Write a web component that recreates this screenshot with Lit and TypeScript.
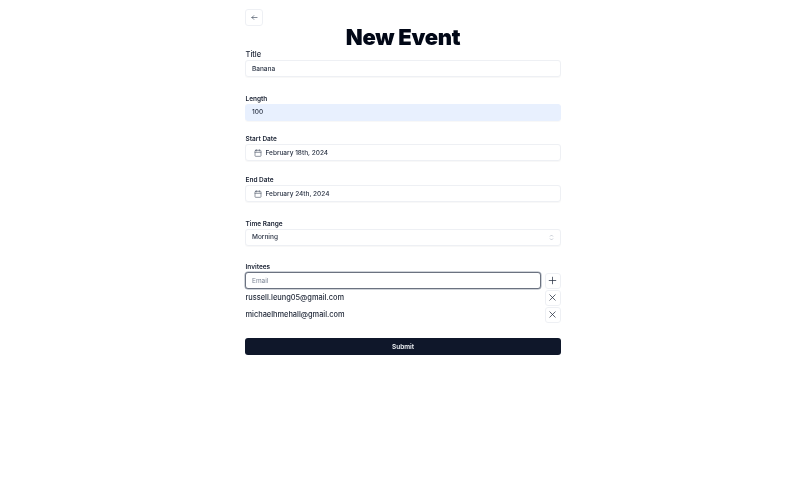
import { LitElement, html, css } from "lit";
import { customElement } from "lit/decorators.js";

const calendar = html`<svg class="cal" viewBox="0 0 24 24" fill="none" stroke="currentColor" stroke-width="2" stroke-linecap="round" stroke-linejoin="round"><rect x="3" y="4" width="18" height="18" rx="2"/><path d="M16 2v4M8 2v4M3 10h18"/></svg>`;
const xIcon = html`<svg class="ic" viewBox="0 0 15 15" fill="none" stroke="#1e293b" stroke-width="1.2" stroke-linecap="round"><path d="M3 3l9 9M12 3l-9 9"/></svg>`;
const plusIcon = html`<svg class="ic" viewBox="0 0 15 15" fill="none" stroke="#1e293b" stroke-width="1.2" stroke-linecap="round"><path d="M7.5 2v11M2 7.5h11"/></svg>`;

@customElement("app-root")
export class AppRoot extends LitElement {
  static styles = css`
    :host { display: block; font-family: Inter, "Liberation Sans", sans-serif; color: #0f172a; background: #fff; height: 504px; }
    .col { width: 316px; margin: 0 auto; padding-top: 9px; display: flex; flex-direction: column; will-change: transform; }
    .back { width: 18px; height: 17px; box-sizing: border-box; border: 1px solid #eef0f4; border-radius: 3px; display: flex; align-items: center; justify-content: center; background: #fff; }
    .back svg { width: 7px; height: 7px; }
    h1 { margin: 0; font-size: 22px; line-height: 23px; height: 23px; font-weight: 900; text-align: center; color: #020817; letter-spacing: -0.3px; }
    .label { font-size: 6.5px; line-height: 9px; height: 9px; font-weight: 600; color: #1a2233; padding-left: 0.5px; }
    .label.big { font-size: 7.5px; line-height: 10px; height: 10px; margin-top: 1px; font-weight: 500; }
    .field { box-sizing: border-box; height: 17px; border: 1px solid #eef0f4; border-radius: 3px; background: #fff; display: flex; align-items: center; padding: 0 6px; font-size: 6.5px; font-weight: 500; color: #2a3344; box-shadow: 0 0.5px 1px rgba(15,23,42,0.03); }
    .filled { background: #e8f0fe; border-color: #e8f0fe; }
    .date { padding-left: 7.5px; gap: 4px; }
    .cal { width: 8px; height: 8px; color: #5b6472; flex: none; }
    .sel { justify-content: space-between; }
    .sel svg { width: 5px; height: 7px; color: #a3abb8; }
    .g1 { margin-top: 17.5px; }
    .g2 { margin-top: 14.5px; }
    .g2b { margin-top: 15px; }
    .g3 { margin-top: 17.5px; }
    .row { display: flex; align-items: center; gap: 4px; height: 17px; }
    .email { flex: 1; border: 1px solid #6b7280; border-radius: 3px; height: 17px; color: #7b8494; font-weight: 400; box-shadow: 0 0 0 0.5px #a0a7b3; }
    .text { flex: 1; font-size: 7.4px; font-weight: 500; color: #1e2636; padding-left: 0.5px; }
    .btn { width: 16px; height: 16px; box-sizing: border-box; border: 1px solid #eef0f4; border-radius: 3px; display: flex; align-items: center; justify-content: center; padding-right: 1px; background: #fff; flex: none; }
    .ic { width: 9px; height: 9px; }
    .submit { margin-top: 15px; height: 17px; border-radius: 3px; background: #0f172a; color: #eef1f5; font-size: 6.5px; font-weight: 600; display: flex; align-items: center; justify-content: center; }
  `;

  render() {
    return html`<div class="col">
      <div class="back"><svg viewBox="0 0 15 15" fill="none" stroke="#334155" stroke-width="1.3" stroke-linecap="round" stroke-linejoin="round"><path d="M13 7.5H2M6 3.5l-4 4 4 4"/></svg></div>
      <h1>New Event</h1>
      <div class="label big">Title</div>
      <div class="field">Banana</div>
      <div class="label g1">Length</div>
      <div class="field filled">100</div>
      <div class="label g2">Start Date</div>
      <div class="field date">${calendar}February 18th, 2024</div>
      <div class="label g2b">End Date</div>
      <div class="field date">${calendar}February 24th, 2024</div>
      <div class="label g3">Time Range</div>
      <div class="field sel">Morning<svg viewBox="0 0 10 14" fill="none" stroke="currentColor" stroke-width="1.2"><path d="M2 5l3-3 3 3M2 9l3 3 3-3"/></svg></div>
      <div class="label g3">Invitees</div>
      <div class="row"><div class="field email">Email</div><div class="btn">${plusIcon}</div></div>
      <div class="row"><div class="text">russell.leung05@gmail.com</div><div class="btn">${xIcon}</div></div>
      <div class="row"><div class="text">michaelhmehall@gmail.com</div><div class="btn">${xIcon}</div></div>
      <div class="submit">Submit</div>
    </div>`;
  }
}
